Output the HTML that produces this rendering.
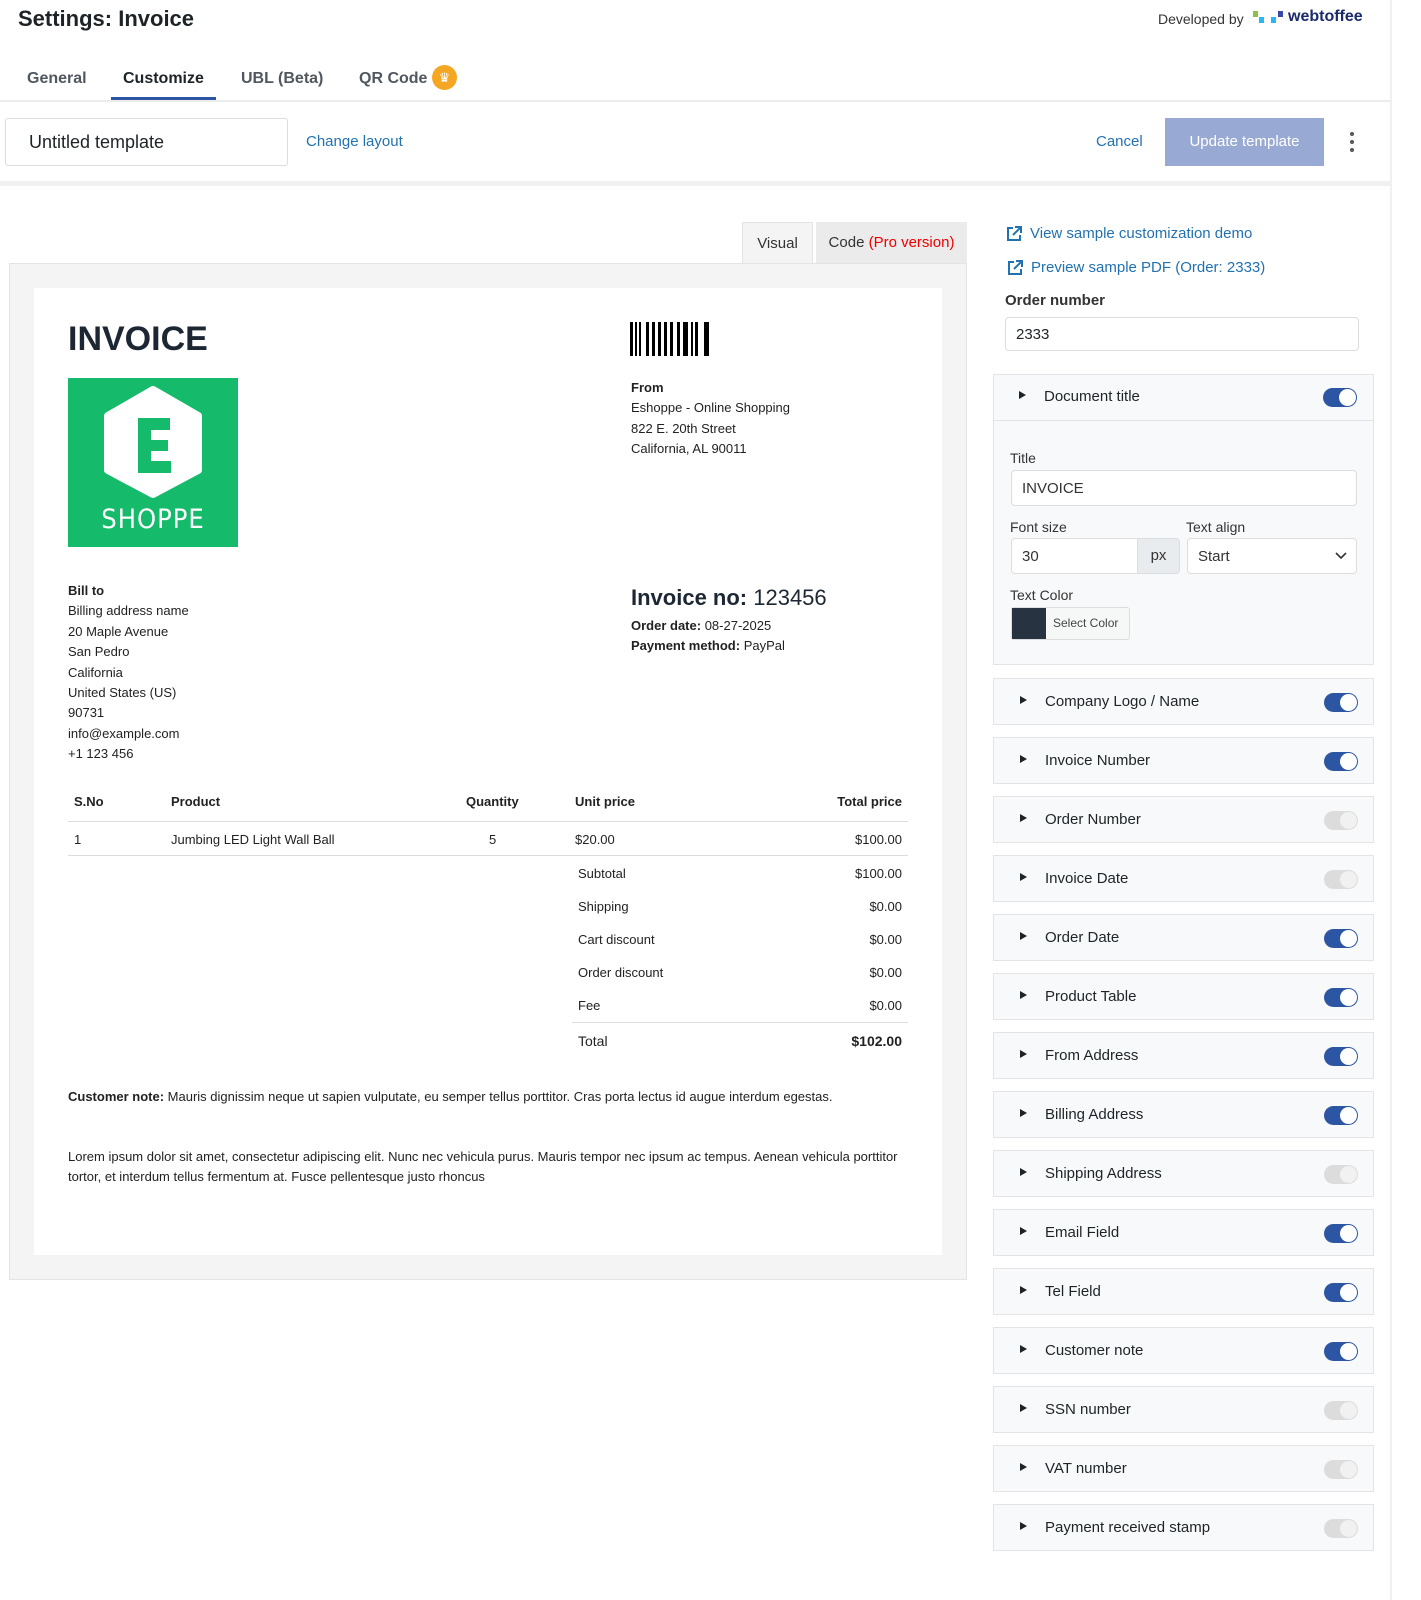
<!DOCTYPE html>
<html><head><meta charset="utf-8"><style>
*{box-sizing:border-box;margin:0;padding:0}
body{width:1421px;height:1600px;position:relative;background:#fff;font-family:"Liberation Sans",Arial,sans-serif;color:#1d2327;overflow:hidden}
.a{position:absolute}
.sec{position:absolute;left:993px;width:381px;height:47px;border:1px solid #e2e4e7;background:#f8f9fa}
.sec .tri{position:absolute;left:26px;top:17px;width:0;height:0;border-left:7px solid #1d2327;border-top:4.5px solid transparent;border-bottom:4.5px solid transparent}
.sec .lb{position:absolute;left:51px;top:14px;font-size:15px;color:#1d2327}
.tg{position:absolute;left:330px;top:14px;width:34px;height:19px;border-radius:10px;background:#2c55a4}
.tg:after{content:"";position:absolute;right:1px;top:1px;width:17px;height:17px;border-radius:50%;background:#fff}
.tg.off{background:#dcdcdc}
.tg.off:after{right:auto;left:auto;right:1px;background:#f1f1f1}
.inv{font-size:13px;line-height:20.4px;color:#222}
.row{position:absolute;font-size:13px;color:#222}
.r{text-align:right}
</style></head><body>
<div class="a" style="left:18px;top:6px;font-size:22px;font-weight:bold;color:#1d2327">Settings: Invoice</div>
<div class="a" style="left:1158px;top:11px;font-size:14px;color:#333">Developed by</div>
<div class="a" style="left:1253px;top:11px;width:5px;height:6px;background:#8bc34a"></div>
<div class="a" style="left:1259px;top:17px;width:5px;height:6px;background:#29b6f6"></div>
<div class="a" style="left:1271px;top:17px;width:5px;height:6px;background:#29b6f6"></div>
<div class="a" style="left:1278px;top:11px;width:5px;height:6px;background:#3949ab"></div>
<div class="a" style="left:1288px;top:8px;font-size:16px;font-weight:bold;color:#1a2a6c">webtoffee</div>

<div class="a" style="left:27px;top:70px;font-size:16px;font-weight:bold;color:#50575e">General</div>
<div class="a" style="left:123px;top:70px;font-size:16px;font-weight:bold;color:#1d2327">Customize</div>
<div class="a" style="left:111px;top:97px;width:105px;height:3px;background:#2c55a4"></div>
<div class="a" style="left:241px;top:70px;font-size:16px;font-weight:bold;color:#50575e">UBL (Beta)</div>
<div class="a" style="left:359px;top:70px;font-size:16px;font-weight:bold;color:#50575e">QR Code</div>
<div class="a" style="left:432px;top:65px;width:25px;height:25px;border-radius:50%;background:#f5a623;color:#fff;font-size:13px;text-align:center;line-height:25px">♛</div>
<div class="a" style="left:0;top:100px;width:1392px;height:2px;background:#ececec"></div>
<div class="a" style="left:1390px;top:0;width:2px;height:1600px;background:#f0f0f0"></div>

<div class="a" style="left:5px;top:118px;width:283px;height:48px;border:1px solid #ddd;border-radius:3px;font-size:18px;padding:13px 0 0 23px;color:#1d2327">Untitled template</div>
<div class="a" style="left:306px;top:133px;font-size:15px;color:#2271b1">Change layout</div>
<div class="a" style="left:1096px;top:133px;font-size:15px;color:#2271b1">Cancel</div>
<div class="a" style="left:1165px;top:118px;width:159px;height:48px;background:#98a9d4;color:#fff;font-size:15px;text-align:center;line-height:48px">Update template</div>
<div class="a" style="left:1350px;top:132px;width:4px;height:4px;border-radius:50%;background:#555;box-shadow:0 8px 0 #555,0 16px 0 #555"></div>
<div class="a" style="left:0;top:181px;width:1392px;height:5px;background:#f0f0f1"></div>

<div class="a" style="left:742px;top:222px;width:71px;height:42px;background:#f4f4f4;border:1px solid #e4e4e4;border-bottom:none;font-size:15px;text-align:center;line-height:42px;color:#333">Visual</div>
<div class="a" style="left:816px;top:222px;width:151px;height:41px;background:#ebebeb;font-size:15px;text-align:center;line-height:42px;color:#333">Code <span style="color:#e00">(Pro version)</span></div>
<div class="a" style="left:9px;top:263px;width:958px;height:1017px;background:#f4f4f4;border:1px solid #e4e4e4"></div>
<div class="a" style="left:34px;top:288px;width:908px;height:967px;background:#fff"></div>

<div class="a" style="left:68px;top:320px;font-size:34px;font-weight:bold;color:#1d2733">INVOICE</div>
<svg class="a" style="left:68px;top:378px" width="170" height="169" viewBox="0 0 170 169">
<rect width="170" height="169" fill="#16ba6b"/>
<polygon points="85,12 130,38 130,92 85,116 40,92 40,38" fill="#fff" stroke="#fff" stroke-width="8" stroke-linejoin="round"/>
<path d="M70 40h32v12H83v10h17v11H83v10h20v12H70z" fill="#16ba6b"/>
<text x="85" y="150" text-anchor="middle" font-family="DejaVu Sans Condensed,Liberation Sans,sans-serif" font-size="27" fill="#fff" letter-spacing="1">SHOPPE</text>
</svg>
<svg class="a" style="left:630px;top:322px" width="82" height="34">
<g fill="#000"><rect x="0" width="3" height="34"/><rect x="5" width="2" height="34"/><rect x="9" width="2" height="34"/><rect x="16" width="3" height="34"/><rect x="22" width="3" height="34"/><rect x="28" width="3" height="34"/><rect x="34" width="3" height="34"/><rect x="40" width="3" height="34"/><rect x="47" width="3" height="34"/><rect x="53" width="5" height="34"/><rect x="61" width="2" height="34"/><rect x="65" width="3" height="34"/><rect x="74" width="5" height="34"/></g></svg>

<div class="a inv" style="left:631px;top:378px"><b>From</b><br>Eshoppe - Online Shopping<br>822 E. 20th Street<br>California, AL 90011</div>
<div class="a inv" style="left:68px;top:581px"><b>Bill to</b><br>Billing address name<br>20 Maple Avenue<br>San Pedro<br>California<br>United States (US)<br>90731<br>info@example.com<br>+1 123 456</div>
<div class="a" style="left:631px;top:585px;font-size:22px;color:#1d2733"><b>Invoice no:</b> 123456</div>
<div class="a inv" style="left:631px;top:616px"><b>Order date:</b> 08-27-2025<br><b>Payment method:</b> PayPal</div>

<div class="row" style="left:74px;top:794px;font-weight:bold">S.No</div>
<div class="row" style="left:171px;top:794px;font-weight:bold">Product</div>
<div class="row" style="left:466px;top:794px;font-weight:bold">Quantity</div>
<div class="row" style="left:575px;top:794px;font-weight:bold">Unit price</div>
<div class="row r" style="left:760px;width:142px;top:794px;font-weight:bold">Total price</div>
<div class="a" style="left:68px;top:821px;width:840px;height:1px;background:#ddd"></div>
<div class="row" style="left:74px;top:832px">1</div>
<div class="row" style="left:171px;top:832px">Jumbing LED Light Wall Ball</div>
<div class="row" style="left:489px;top:832px">5</div>
<div class="row" style="left:575px;top:832px">$20.00</div>
<div class="row r" style="left:760px;width:142px;top:832px">$100.00</div>
<div class="a" style="left:68px;top:855px;width:840px;height:1px;background:#ddd"></div>
<div class="row" style="left:578px;top:866px">Subtotal</div><div class="row r" style="left:760px;width:142px;top:866px">$100.00</div>
<div class="row" style="left:578px;top:899px">Shipping</div><div class="row r" style="left:760px;width:142px;top:899px">$0.00</div>
<div class="row" style="left:578px;top:932px">Cart discount</div><div class="row r" style="left:760px;width:142px;top:932px">$0.00</div>
<div class="row" style="left:578px;top:965px">Order discount</div><div class="row r" style="left:760px;width:142px;top:965px">$0.00</div>
<div class="row" style="left:578px;top:998px">Fee</div><div class="row r" style="left:760px;width:142px;top:998px">$0.00</div>
<div class="a" style="left:572px;top:1022px;width:336px;height:1px;background:#ddd"></div>
<div class="row" style="left:578px;top:1033px;font-size:14px">Total</div><div class="row r" style="left:760px;width:142px;top:1033px;font-size:14px;font-weight:bold">$102.00</div>

<div class="a inv" style="left:68px;top:1087px"><b>Customer note:</b> Mauris dignissim neque ut sapien vulputate, eu semper tellus porttitor. Cras porta lectus id augue interdum egestas.</div>
<div class="a inv" style="left:68px;top:1147px;width:850px">Lorem ipsum dolor sit amet, consectetur adipiscing elit. Nunc nec vehicula purus. Mauris tempor nec ipsum ac tempus. Aenean vehicula porttitor tortor, et interdum tellus fermentum at. Fusce pellentesque justo rhoncus</div>

<svg class="a" style="left:1006px;top:225px" width="17" height="17" viewBox="0 0 17 17" fill="none" stroke="#2271b1" stroke-width="2"><path d="M7 3H2v12h12v-5M9 2h6v6M15 2L7 10"/></svg>
<div class="a" style="left:1030px;top:225px;font-size:15px;color:#2271b1">View sample customization demo</div>
<svg class="a" style="left:1007px;top:259px" width="17" height="17" viewBox="0 0 17 17" fill="none" stroke="#2271b1" stroke-width="2"><path d="M7 3H2v12h12v-5M9 2h6v6M15 2L7 10"/></svg>
<div class="a" style="left:1031px;top:259px;font-size:15px;color:#2271b1">Preview sample PDF (Order: 2333)</div>
<div class="a" style="left:1005px;top:292px;font-size:15px;font-weight:bold;color:#333">Order number</div>
<div class="a" style="left:1005px;top:317px;width:354px;height:34px;border:1px solid #ddd;border-radius:4px;font-size:15px;padding:8px 10px">2333</div>

<div class="a" style="left:993px;top:374px;width:381px;height:291px;border:1px solid #e2e4e7;background:#f8f9fa"></div>
<div class="a" style="left:993px;top:420px;width:381px;height:1px;background:#e2e4e7"></div>
<div class="sec" style="top:374px;border:none;background:transparent"><div class="tri"></div><div class="lb">Document title</div><div class="tg"></div></div>
<div class="a" style="left:1010px;top:450px;font-size:14px;color:#333">Title</div>
<div class="a" style="left:1011px;top:470px;width:346px;height:36px;background:#fff;border:1px solid #ddd;border-radius:4px;font-size:15px;padding:9px 10px;color:#333">INVOICE</div>
<div class="a" style="left:1010px;top:519px;font-size:14px;color:#333">Font size</div>
<div class="a" style="left:1186px;top:519px;font-size:14px;color:#333">Text align</div>
<div class="a" style="left:1011px;top:538px;width:169px;height:36px;background:#fff;border:1px solid #ddd;border-radius:4px;font-size:15px;padding:9px 10px;color:#333">30</div>
<div class="a" style="left:1137px;top:538px;width:43px;height:36px;background:#e9ecef;border:1px solid #ddd;border-radius:0 4px 4px 0;font-size:15px;text-align:center;line-height:34px;color:#333">px</div>
<div class="a" style="left:1187px;top:538px;width:170px;height:36px;background:#fff;border:1px solid #ddd;border-radius:4px;font-size:15px;padding:9px 10px;color:#333">Start</div>
<svg class="a" style="left:1335px;top:551px" width="12" height="9"><path d="M1 2l5 5 5-5" fill="none" stroke="#333" stroke-width="1.6"/></svg>
<div class="a" style="left:1010px;top:587px;font-size:14px;color:#333">Text Color</div>
<div class="a" style="left:1011px;top:607px;width:119px;height:33px;border:1px solid #ddd;border-radius:3px;background:#f6f7f7"></div>
<div class="a" style="left:1012px;top:608px;width:34px;height:31px;background:#283341"></div>
<div class="a" style="left:1053px;top:616px;font-size:12px;color:#444">Select Color</div>

<div class="sec" style="top:678px"><div class="tri"></div><div class="lb">Company Logo / Name</div><div class="tg"></div></div>
<div class="sec" style="top:737px"><div class="tri"></div><div class="lb">Invoice Number</div><div class="tg"></div></div>
<div class="sec" style="top:796px"><div class="tri"></div><div class="lb">Order Number</div><div class="tg off"></div></div>
<div class="sec" style="top:855px"><div class="tri"></div><div class="lb">Invoice Date</div><div class="tg off"></div></div>
<div class="sec" style="top:914px"><div class="tri"></div><div class="lb">Order Date</div><div class="tg"></div></div>
<div class="sec" style="top:973px"><div class="tri"></div><div class="lb">Product Table</div><div class="tg"></div></div>
<div class="sec" style="top:1032px"><div class="tri"></div><div class="lb">From Address</div><div class="tg"></div></div>
<div class="sec" style="top:1091px"><div class="tri"></div><div class="lb">Billing Address</div><div class="tg"></div></div>
<div class="sec" style="top:1150px"><div class="tri"></div><div class="lb">Shipping Address</div><div class="tg off"></div></div>
<div class="sec" style="top:1209px"><div class="tri"></div><div class="lb">Email Field</div><div class="tg"></div></div>
<div class="sec" style="top:1268px"><div class="tri"></div><div class="lb">Tel Field</div><div class="tg"></div></div>
<div class="sec" style="top:1327px"><div class="tri"></div><div class="lb">Customer note</div><div class="tg"></div></div>
<div class="sec" style="top:1386px"><div class="tri"></div><div class="lb">SSN number</div><div class="tg off"></div></div>
<div class="sec" style="top:1445px"><div class="tri"></div><div class="lb">VAT number</div><div class="tg off"></div></div>
<div class="sec" style="top:1504px"><div class="tri"></div><div class="lb">Payment received stamp</div><div class="tg off"></div></div>
</body></html>
